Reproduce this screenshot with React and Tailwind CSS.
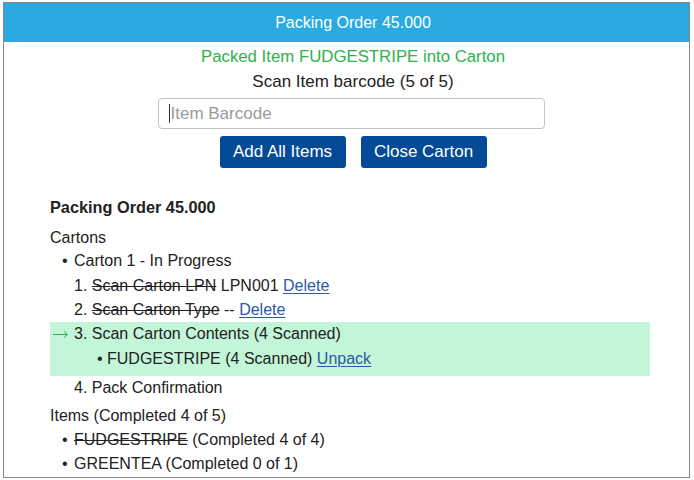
import React from "react";

const Link = ({ children }) => (
  <a href="#" className="text-[#2a5aa8] underline underline-offset-2">
    {children}
  </a>
);

const Row = ({ className = "", children }) => (
  <div className={`flex items-center h-[24px] whitespace-pre ${className}`}>{children}</div>
);

const Arrow = () => (
  <svg width="22" height="10" viewBox="0 0 22 10" className="shrink-0">
    <path d="M1 5.5H15M12 2.5L15.5 5.5L12 8.5" fill="none" stroke="#2eb24c" strokeWidth="1" />
  </svg>
);

export default function App() {
  return (
    <div className="w-[694px] h-[480px] bg-white font-['Liberation_Sans',Arial,sans-serif] text-[16px] text-[#222]">
      <div className="ml-[3px] pt-[2px]">
        <div className="w-[687px] h-[476px] border border-[#878787] overflow-hidden">
          <div className="h-[39px] bg-[#29abe2] text-white flex items-center justify-center pl-[13px]">
            Packing Order 45.000
          </div>

          <div className="flex flex-col items-center pl-[13px] text-[17px]">
            <div className="mt-[2px] h-[25px] flex items-center text-[16.8px] text-[#2eb24c]">
              Packed Item FUDGESTRIPE into Carton
            </div>
            <div className="h-[25px] flex items-center">Scan Item barcode (5 of 5)</div>
            <div className="relative mt-[4px] ml-[-4px] w-[387px] h-[31px]">
              <input
                className="w-full h-full rounded-[4px] border border-[#c4c4c4] pl-[12px] text-[17px] outline-none placeholder:text-[#9a9a9a]"
                placeholder="Item Barcode"
              />
              <span className="absolute left-[11px] top-[6px] w-px h-[19px] bg-[#333]" />
            </div>
            <div className="mt-[7px] flex gap-[15px]">
              <button className="w-[126px] h-[32px] rounded-[3px] bg-[#034a97] text-white">
                Add All Items
              </button>
              <button className="w-[126px] h-[32px] rounded-[3px] bg-[#034a97] text-white">
                Close Carton
              </button>
            </div>
          </div>

          <div className="pl-[46px] pr-[39px]">
            <div className="mt-[27px] h-[24px] flex items-center font-bold text-[16.3px]">Packing Order 45.000</div>
            <div className="mt-[8px] h-[22px] flex items-center">Cartons</div>
            <Row className="pl-[12px] h-[23px]">
              <span className="w-[12px]">•</span>Carton 1 - In Progress
            </Row>
            <Row className="pl-[24px] h-[25px]">
              1. <span className="line-through">Scan Carton LPN</span> LPN001 <Link>Delete</Link>
            </Row>
            <Row className="pl-[24px]">
              2. <span className="line-through">Scan Carton Type</span> -- <Link>Delete</Link>
            </Row>
            <div className="bg-[#c3f5d8] pb-[5px]">
              <Row className="pl-[2px]">
                <Arrow />3. Scan Carton Contents (4 Scanned)
              </Row>
              <Row className="pl-[47px] h-[25px]">
                <span className="w-[10px]">•</span>FUDGESTRIPE (4 Scanned) <Link>Unpack</Link>
              </Row>
            </div>
            <Row className="pl-[24px]">4. Pack Confirmation</Row>
            <Row className="mt-[4px]">Items (Completed 4 of 5)</Row>
            <Row className="pl-[12px]">
              <span className="w-[12px]">•</span>
              <span className="line-through">FUDGESTRIPE</span> (Completed 4 of 4)
            </Row>
            <Row className="pl-[12px]">
              <span className="w-[12px]">•</span>GREENTEA (Completed 0 of 1)
            </Row>
          </div>
        </div>
      </div>
    </div>
  );
}
